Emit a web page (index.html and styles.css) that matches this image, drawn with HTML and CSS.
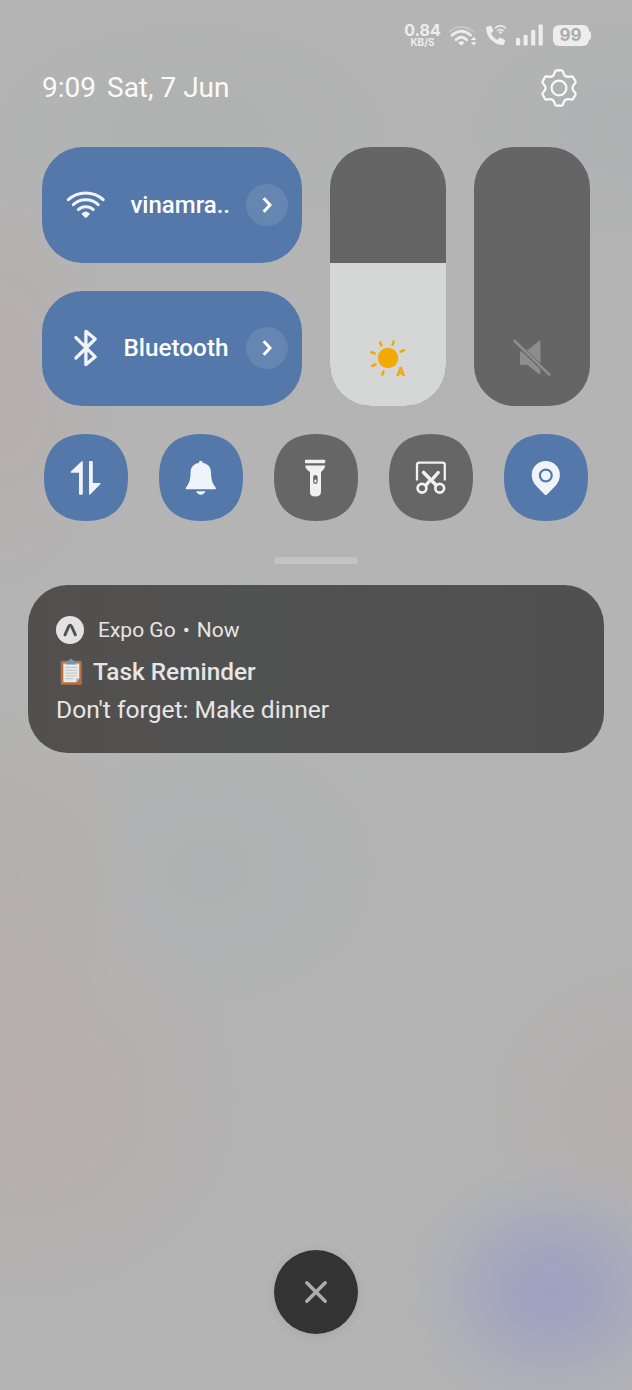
FILE: index.html
```html
<!DOCTYPE html>
<html lang="en">
<head>
<meta charset="utf-8">
<title>Notification shade</title>
<link rel="stylesheet" href="styles.css">
</head>
<body>
<main class="shade">
  <div class="status">
    <div class="speed"><span class="speed-value">0.84</span><span class="speed-unit">KB/S</span></div>
    <svg class="status-wifi" width="30" height="24" viewBox="448 23 30 24" fill="none" stroke="#ededed" stroke-width="2.8" stroke-linecap="round">
      <path d="M450 31.2Q461 22.5 473 31.2" stroke="#c5c5c5" stroke-width="2"/>
      <path d="M452 35.2Q461.3 27 470.7 35.2M456 39.8Q461.3 34.8 466.7 39.8"/>
      <path d="M458 42.5Q461.3 39.8 464.5 42.5L461.3 45.7Z" fill="#ededed" stroke="none"/>
      <path d="M470.8 40L473.7 36.8L476.6 40ZM470.8 42.3H476.6L473.7 45.5Z" fill="#ededed" stroke="none"/>
    </svg>
    <svg class="status-call" width="24" height="24" viewBox="484 23 24 24" fill="none" stroke="#ededed" stroke-linecap="round">
      <path d="M487 26.7L490.2 25.8Q491.3 25.6 491.7 26.6L493.2 30.3Q493.5 31.2 492.7 31.9L490.9 33.4Q493.2 37.7 497.3 39.9L499 38.1Q499.7 37.4 500.5 37.7L504.3 39.5Q505.3 40 505 41L504 44Q503.7 45 502.5 44.9C493.5 44.5 486.3 37.2 486.1 28Q486.1 27 487 26.7Z" fill="#ededed" stroke="none"/>
      <path d="M495.3 28Q500.3 23.5 505.5 28" stroke-width="1.5"/><path d="M497.6 30.7Q500.4 28.3 503.2 30.7" stroke-width="1.4"/>
      <circle cx="500.4" cy="32.5" r="1.2" fill="#ededed" stroke="none"/>
    </svg>
    <svg class="status-signal" width="28" height="24" viewBox="515 23 28 24" fill="#ededed">
      <rect x="516" y="38" width="4.2" height="7.5" rx="1"/><rect x="523.5" y="35" width="4.2" height="10.5" rx="1"/>
      <rect x="531.1" y="30" width="4.2" height="15.5" rx="1"/><rect x="538.6" y="24.5" width="4.2" height="21" rx="1"/>
    </svg>
    <div class="battery">99</div>
  </div>

  <header class="header">
    <div class="datetime"><span>9:09</span><span>Sat, 7 Jun</span></div>
    <svg width="40" height="40" viewBox="-20 -20 40 40" fill="none" stroke="#fafafa" stroke-width="2.2" stroke-linecap="round">
      <defs><path id="tooth" d="M0 -17.6H2.4Q3.4 -17.6 3.8 -16.7L4.9 -13.8Q6.3 -10.9 9.5 -11.14L12.57 -11.64Q13.54 -11.74 14.04 -10.9L15.24 -8.8"/></defs>
      <use href="#tooth"/><use href="#tooth" transform="rotate(60)"/><use href="#tooth" transform="rotate(120)"/>
      <use href="#tooth" transform="rotate(180)"/><use href="#tooth" transform="rotate(240)"/><use href="#tooth" transform="rotate(300)"/>
      <circle r="7.4"/>
    </svg>
  </header>

  <section class="controls">
    <div class="tiles">
      <div class="tile">
        <svg width="40" height="32" viewBox="66 189 40 32" fill="none" stroke="#eff3fa" stroke-width="3" stroke-linecap="round">
          <path d="M68.3 199.7A25.8 25.8 0 0 1 103.2 199.7M73.3 204.7A18.3 18.3 0 0 1 98.2 204.7M78.3 209.6A11.3 11.3 0 0 1 93.3 209.6"/>
          <path d="M82 213.2Q85.7 209.6 89.5 213.2Q90 213.8 89.5 214.4L86.6 217.6Q85.8 218.5 85 217.6L82 214.4Q81.4 213.8 82 213.2Z" fill="#eff3fa" stroke="none"/>
        </svg>
        <span class="tile-label">vinamra..</span>
        <span class="more"><svg width="14" height="18" viewBox="0 0 14 18"><path d="M3.7 2.3L10 9L3.7 15.7"/></svg></span>
      </div>
      <div class="tile">
        <svg width="40" height="40" viewBox="66 328 40 40" fill="none" stroke="#eff3fa" stroke-width="3.3" stroke-linecap="round" stroke-linejoin="round">
          <path d="M75.9 337.6L95.2 356.8L85.9 364.6V331.4L95.2 339L75.9 358"/>
        </svg>
        <span class="tile-label tile-label-wide">Bluetooth</span>
        <span class="more"><svg width="14" height="18" viewBox="0 0 14 18"><path d="M3.7 2.3L10 9L3.7 15.7"/></svg></span>
      </div>
    </div>
    <div class="slider">
      <div class="slider-fill">
        <svg width="40" height="40" viewBox="-20 -20 40 40" fill="none" stroke="#f2a900" stroke-width="2.5" stroke-linecap="round">
          <circle r="10.2" fill="#f2a900" stroke="none"/>
          <path d="M-6.6 -12.6L-7.9 -15.6M4.6 -13.4L5.7 -16.5M12.7 -6.3L15.8 -7.9M-13.4 -4.6L-16.7 -5.7M-12.6 6.5L-15.8 8M-4.5 13.5L-5.6 16.6"/>
          <text class="auto" x="8.7" y="17.5">A</text>
        </svg>
      </div>
    </div>
    <div class="slider slider-muted">
      <svg width="40" height="40" viewBox="512 338 40 40" fill="#8d8d8d">
        <path d="M526.3 349.8L528.7 349.3L539 340.9Q540.5 340 540.5 341.8V363.3ZM520 352.6Q520 351.6 521 351.6H522L540.5 369.6V373Q540 375 538 373.5L527.5 365H521.2Q520 365 520 363.8Z"/>
        <path d="M513.7 340L550 375.4" fill="none" stroke="#8d8d8d" stroke-width="2.6"/>
      </svg>
    </div>
  </section>

  <section class="quick">
    <div class="round on"><svg width="40" height="40" viewBox="66 457.5 40 40" fill="#eff3fa">
      <path d="M82.8 461V493.3Q82.8 494.3 81.8 494.3H80Q79 494.3 79 493.3V472.2H71.2Q70 472 70.8 471L81.5 461Q82.5 460 82.8 461ZM89 461.5Q89 460.6 90 460.6H91.8Q92.8 460.6 92.8 461.6V482.6H99.8Q101.2 482.8 100.3 483.8L90.4 493.8Q89 495 89 493.6Z"/></svg></div>
    <div class="round on"><svg width="40" height="40" viewBox="181 457.5 40 40" fill="#eff3fa">
      <path d="M198.8 462.6Q198.8 460.2 200.8 460.2T202.8 462.6C208 463.2 210.9 467 211 471.5C211.3 479.5 212 482.3 215.8 487.2Q216.5 488.8 215 488.8H186.5Q185 488.8 185.8 487.2C189.6 482.3 190.3 479.5 190.6 471.5C190.7 467 193.6 463.2 198.8 462.6ZM196 490.8H205.5Q204 494.2 200.8 494.2T196 490.8Z"/></svg></div>
    <div class="round"><svg width="40" height="40" viewBox="296 457.5 40 40" fill="#f1f1f1">
      <rect x="305" y="459.3" width="20.2" height="3.4" rx=".8"/>
      <path d="M305.2 465H325.2Q325 467.8 323 469.6L321 471.5V491Q321 496 315.3 496T310 491V471.5L307.4 469.6Q305.2 467.8 305.2 465Z"/>
      <rect x="313.2" y="474.5" width="4.4" height="8.9" rx="2.2" fill="#666"/><rect x="314.4" y="479" width="2" height="3.2" rx="1"/></svg></div>
    <div class="round"><svg width="40" height="40" viewBox="411 457.5 40 40" fill="none" stroke="#f1f1f1">
      <path d="M417 480V464.4Q417 462.2 419.2 462.2H442.6Q444.8 462.2 444.8 464.4V480" stroke-width="2.3"/>
      <circle cx="422" cy="487.8" r="4.4" stroke-width="2.7"/><circle cx="439.7" cy="487.8" r="4.4" stroke-width="2.7"/>
      <path d="M423.6 472L436 484.6" stroke-width="3.6" stroke-linecap="round"/>
      <path d="M438.2 472L433.3 477.6M428.8 481.4L426 484.6" stroke-width="3.4" stroke-linecap="round"/></svg></div>
    <div class="round on"><svg width="40" height="40" viewBox="526 457.5 40 40" fill="#eff3fa">
      <path d="M547 494.1Q545.8 495.2 544.6 494.1L537 486.3Q531.7 481 531.7 474.5A14.1 14.1 0 0 1 559.9 474.5Q559.9 481 554.6 486.3Z"/>
      <circle cx="545.8" cy="475" r="5.9" fill="none" stroke="#5378a9" stroke-width="2.2"/></svg></div>
  </section>

  <div class="handle"></div>

  <article class="notice">
    <div class="notice-head">
      <svg width="28" height="28" viewBox="56 616 28 28"><circle cx="70" cy="630" r="14" fill="#e2e2e2"/><path d="M65 634.8L68.6 626.6Q70.1 623.7 71.7 626.6L75.4 634.8" fill="none" stroke="#505050" stroke-width="2.9" stroke-linecap="round"/></svg>
      <span class="source"><span>Expo Go</span><span>•</span><span>Now</span></span>
    </div>
    <div class="notice-title">
      <svg width="30" height="28" viewBox="56 658 30 28">
        <rect x="60.7" y="660.8" width="21" height="24" rx="1.2" fill="#b87042"/>
        <path d="M63.3 663.5H79.3V678.5L76.3 682.2H63.3Z" fill="#e8e9e9"/><path d="M79.3 678.5H76.3V682.2Z" fill="#aaa"/>
        <path d="M65.5 664.5V662.3Q65.5 661.3 67 661.2Q68.8 661 69.3 659.8Q70.8 657.7 72.5 659.8Q73 661 75 661.2Q76.3 661.3 76.3 662.3V664.5Z" fill="#7299a6"/>
        <path d="M65.3 667.5H77M65.3 670.3H77M65.3 673.1H77M65.3 675.9H77M65.3 678.7H74" stroke="#b9bcbd" stroke-width=".8"/>
      </svg>
      <span>Task Reminder</span>
    </div>
    <div class="notice-text">Don't forget: Make dinner</div>
  </article>

  <div class="close"><svg width="28" height="28" viewBox="0 0 28 28"><path d="M4.8 4.8L23.2 23.2M23.2 4.8L4.8 23.2" stroke="#adadad" stroke-width="3.5" stroke-linecap="round"/></svg></div>
</main>
</body>
</html>
```
FILE: styles.css
```css
* { box-sizing: border-box; }
body { margin: 0; font-family: Roboto, "Liberation Sans", sans-serif; }
svg { display: block; flex: none; }
.shade {
  width: 632px;
  height: 1390px;
  display: flex;
  flex-direction: column;
  padding: 23px 28px 56px;
  background:
    radial-gradient(ellipse 150px 130px at 552px 1290px, rgba(157,160,194,.95) 0%, rgba(157,160,194,.7) 35%, rgba(157,160,194,.2) 75%, rgba(157,160,194,0) 100%),
    radial-gradient(ellipse 230px 210px at 20px 1100px, rgba(184,170,170,.75), rgba(184,170,170,0)),
    radial-gradient(ellipse 120px 220px at 0 380px, rgba(184,171,171,.75), rgba(184,171,171,0)),
    radial-gradient(ellipse 150px 150px at 632px 1110px, rgba(179,170,168,.6), rgba(179,170,168,0)),
    radial-gradient(ellipse 140px 180px at 0 880px, rgba(178,171,165,.6), rgba(178,171,165,0)),
    radial-gradient(ellipse 200px 160px at 210px 870px, rgba(173,176,177,.6), rgba(173,176,177,0)),
    radial-gradient(ellipse 180px 120px at 632px 130px, rgba(171,174,175,.6), rgba(171,174,175,0)),
    radial-gradient(ellipse 220px 120px at 190px 130px, rgba(172,174,174,.6), rgba(172,174,174,0)),
    #b4b4b4;
}
.status { display: flex; justify-content: flex-end; height: 24px; padding-right: 15.5px; color: #ededed; }
.speed { width: 36px; display: flex; flex-direction: column; align-items: center; font-family: Inter, sans-serif; font-weight: 700; }
.speed-value { font-size: 16px; line-height: 14px; }
.speed-unit { font-size: 10px; line-height: 10px; }
.status-wifi { margin-left: 7px; }
.status-call { margin-left: 6px; }
.status-signal { margin-left: 7px; }
.battery {
  position: relative;
  width: 36px;
  height: 21px;
  margin: 2px 0 0 10px;
  border-radius: 6px;
  background: #ededed;
  color: #aaa;
  font: 700 17px/21px Inter, sans-serif;
  text-align: center;
}
.battery::after {
  content: "";
  position: absolute;
  left: 35px;
  top: 6px;
  width: 3.5px;
  height: 9px;
  border-radius: 0 4px 4px 0;
  background: #ededed;
}
.header { display: flex; justify-content: space-between; align-items: center; height: 40px; margin-top: 20.5px; padding: 0 25.5px 0 14px; color: #fafafa; }
.datetime { display: flex; gap: 11px; padding-top: 1px; font-size: 28px; line-height: 40px; }
.controls { display: flex; gap: 28px; height: 259px; margin: 39.5px 14px 0; }
.tiles { width: 260px; display: flex; flex-direction: column; gap: 28px; }
.tile { flex: 1; display: flex; align-items: center; padding: 0 14px 0 24px; border-radius: 41px; background: #5378a9; }
.tile-label { margin: 0 16px 0 auto; color: #fff; font-size: 24px; font-weight: 500; line-height: 32px; }
.tile-label-wide { margin-right: 17.5px; font-size: 24.3px; }
.more { width: 42px; height: 42px; display: flex; align-items: center; justify-content: center; border-radius: 50%; background: #6686b2; }
.more path { fill: none; stroke: #fff; stroke-width: 3; }
.slider { width: 116px; display: flex; flex-direction: column; justify-content: flex-end; border-radius: 41px; background: #656565; overflow: hidden; }
.slider-fill { height: 143px; display: flex; align-items: flex-end; justify-content: center; padding-bottom: 28px; background: #d5d6d6; }
.slider-muted { align-items: center; padding-bottom: 28px; }
.auto { font: 700 12.5px Roboto, sans-serif; fill: #f2a900; stroke: #f2a900; stroke-width: .5px; }
.quick { display: flex; justify-content: space-between; margin: 28px 16px 0; }
.round {
  width: 84px;
  height: 87px;
  display: flex;
  align-items: center;
  justify-content: center;
  background: #666;
  clip-path: path("M0 43.5C0 16 14 0 42 0S84 16 84 43.5S70 87 42 87S0 71 0 43.5Z");
}
.on { background: #5378a9; }
.handle { width: 84px; height: 7px; margin: 35.5px auto 0; border-radius: 4px; background: #c3c3c3; }
.notice { height: 168px; margin-top: 21px; padding: 31px 28px 0; border-radius: 40px; background: linear-gradient(90deg, #534f4e, #505151 35%, #505050); color: #e6e6e6; }
.notice-head { display: flex; align-items: center; gap: 14px; height: 28px; font-size: 21px; }
.source { display: flex; gap: 7px; }
.notice-title { display: flex; align-items: center; gap: 7px; height: 28px; margin-top: 14px; font-size: 24.4px; font-weight: 500; }
.notice-text { margin-top: 8px; font-size: 24.6px; line-height: 32px; }
.close { width: 84px; height: 84px; display: flex; align-items: center; justify-content: center; margin: auto auto 0; border-radius: 50%; background: #333; box-shadow: 0 2px 12px rgba(0,0,0,.08); }
```
